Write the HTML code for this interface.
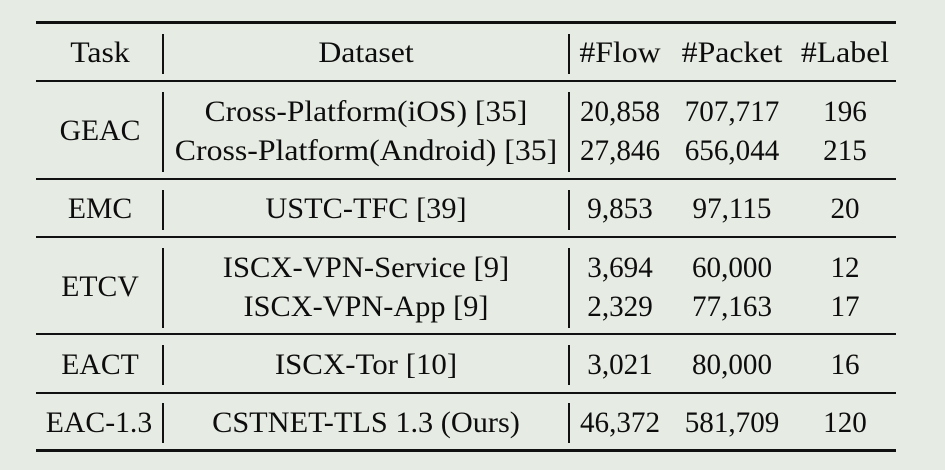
<!DOCTYPE html>
<html><head><meta charset="utf-8"><style>
body{margin:0;width:945px;height:470px;background:#e6ebe3;position:relative;overflow:hidden;font-family:"Liberation Serif",serif;color:#0d0d0d;}
.t{position:absolute;font-size:30px;line-height:28px;white-space:nowrap;transform:translateX(-50%) scaleX(1.06);}
.n{transform:translateX(-50%) scaleX(0.97);}
.k{transform:translateX(-50%) scaleX(0.99);}
.h{position:absolute;left:36px;width:860px;background:#111;}
.v{position:absolute;width:2px;background:#111;}
</style></head><body>
<div class="h" style="top:21px;height:3px"></div>
<div class="h" style="top:80px;height:2px"></div>
<div class="h" style="top:178px;height:2px"></div>
<div class="h" style="top:236px;height:2px"></div>
<div class="h" style="top:333px;height:2px"></div>
<div class="h" style="top:392px;height:2px"></div>
<div class="h" style="top:449px;height:3px"></div>

<div class="v" style="left:162px;top:34px;height:40px"></div><div class="v" style="left:568px;top:34px;height:40px"></div>
<div class="v" style="left:162px;top:92px;height:80px"></div><div class="v" style="left:568px;top:92px;height:80px"></div>
<div class="v" style="left:162px;top:190px;height:40px"></div><div class="v" style="left:568px;top:190px;height:40px"></div>
<div class="v" style="left:162px;top:248px;height:80px"></div><div class="v" style="left:568px;top:248px;height:80px"></div>
<div class="v" style="left:162px;top:345px;height:40px"></div><div class="v" style="left:568px;top:345px;height:40px"></div>
<div class="v" style="left:162px;top:403px;height:40px"></div><div class="v" style="left:568px;top:403px;height:40px"></div>

<div class="t" style="left:100px;top:39px">Task</div>
<div class="t" style="left:366px;top:39px">Dataset</div>
<div class="t" style="left:620px;top:39px">#Flow</div>
<div class="t" style="left:732px;top:39px">#Packet</div>
<div class="t" style="left:845px;top:39px">#Label</div>

<div class="t k" style="left:100px;top:117px">GEAC</div>
<div class="t" style="left:366px;top:98px;transform:translateX(-50%) scaleX(1.05)">Cross-Platform(iOS) [35]</div>
<div class="t" style="left:366px;top:137px">Cross-Platform(Android) [35]</div>
<div class="t n" style="left:620px;top:98px">20,858</div>
<div class="t n" style="left:732px;top:98px">707,717</div>
<div class="t n" style="left:845px;top:98px">196</div>
<div class="t n" style="left:620px;top:137px">27,846</div>
<div class="t n" style="left:732px;top:137px">656,044</div>
<div class="t n" style="left:845px;top:137px">215</div>

<div class="t k" style="left:100px;top:195px">EMC</div>
<div class="t" style="left:366px;top:195px;transform:translateX(-50%) scaleX(1.01)">USTC-TFC [39]</div>
<div class="t n" style="left:620px;top:195px">9,853</div>
<div class="t n" style="left:732px;top:195px">97,115</div>
<div class="t n" style="left:845px;top:195px">20</div>

<div class="t k" style="left:100px;top:273px">ETCV</div>
<div class="t" style="left:366px;top:254px;transform:translateX(-50%) scaleX(1.02)">ISCX-VPN-Service [9]</div>
<div class="t" style="left:366px;top:293px;transform:translateX(-50%) scaleX(1.01)">ISCX-VPN-App [9]</div>
<div class="t n" style="left:620px;top:254px">3,694</div>
<div class="t n" style="left:732px;top:254px">60,000</div>
<div class="t n" style="left:845px;top:254px">12</div>
<div class="t n" style="left:620px;top:293px">2,329</div>
<div class="t n" style="left:732px;top:293px">77,163</div>
<div class="t n" style="left:845px;top:293px">17</div>

<div class="t k" style="left:100px;top:351px">EACT</div>
<div class="t" style="left:366px;top:351px;transform:translateX(-50%) scaleX(1.03)">ISCX-Tor [10]</div>
<div class="t n" style="left:620px;top:351px">3,021</div>
<div class="t n" style="left:732px;top:351px">80,000</div>
<div class="t n" style="left:845px;top:351px">16</div>

<div class="t k" style="left:99px;top:409px">EAC-1.3</div>
<div class="t" style="left:366px;top:409px;transform:translateX(-50%) scaleX(1.01)">CSTNET-TLS 1.3 (Ours)</div>
<div class="t n" style="left:620px;top:409px">46,372</div>
<div class="t n" style="left:732px;top:409px">581,709</div>
<div class="t n" style="left:845px;top:409px">120</div>
</body></html>
